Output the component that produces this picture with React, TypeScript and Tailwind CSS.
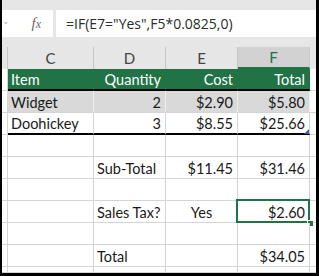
import React from "react";

type Cell = { t?: string; a?: "l" | "r" | "c" };

const cellFont = { fontFamily: "Lato, 'Liberation Sans', sans-serif" };

function Row({
  cells,
  variant,
  selectedF,
  triangle,
  h = 22,
}: {
  cells: Cell[];
  variant: "green" | "gray" | "white" | "plain";
  selectedF?: boolean;
  triangle?: boolean;
  h?: number;
}) {
  const widths = ["w-[86px]", "w-[72px]", "w-[72px]", "w-[72px]"];
  const table = variant !== "plain";
  const bg =
    variant === "green"
      ? "bg-[#217346] text-white"
      : variant === "gray"
      ? "bg-[#d9d9d9] text-[#1a1a1a]"
      : "bg-white text-[#1a1a1a]";
  const bottom =
    variant === "green" || variant === "white"
      ? "border-b-2 border-b-black"
      : "border-b border-b-[#d4d4d4]";
  return (
    <div className="flex shrink-0" style={{ height: h }}>
      <div className="w-[6px] shrink-0 border-r border-r-[#d4d4d4] border-b border-b-[#d4d4d4] bg-white" />
      {cells.map((c, i) => {
        const vr =
          variant === "green"
            ? "border-r border-r-[#217346]"
            : variant === "gray"
            ? "border-r border-r-[#ececec]"
            : "border-r border-r-[#d4d4d4]";
        const align =
          c.a === "r" ? "justify-end pr-[4px]" : c.a === "c" ? "justify-center" : "justify-start pl-[3px]";
        const sel = selectedF && i === 3;
        return (
          <div
            key={i}
            className={`relative shrink-0 flex items-center ${widths[i]} ${table ? bg : "bg-white text-[#1a1a1a]"} ${
              table ? bottom : "border-b border-b-[#d4d4d4]"
            } ${vr} ${align} text-[14.5px] pt-[2px] whitespace-nowrap`}
            style={cellFont}
          >
            {c.t}
            {sel && (
              <>
                <div className="absolute left-[-2px] top-[-2px] right-[-1px] bottom-[-1px] border-2 border-[#217346]" />
                <div className="absolute right-[-5px] bottom-[-5px] w-[7px] h-[7px] bg-[#217346] border border-white" />
              </>
            )}
            {triangle && i === 3 && (
              <svg className="absolute right-[0px] bottom-[-1px]" width="5" height="5" viewBox="0 0 5 5">
                <polygon points="5,0 5,5 0,5" fill="#3b5ba9" />
              </svg>
            )}
          </div>
        );
      })}
      <div className="w-[6px] shrink-0 border-b border-b-[#d4d4d4] bg-white" />
    </div>
  );
}

export default function App() {
  const headers = [
    { l: "C", w: "w-[86px]" },
    { l: "D", w: "w-[72px]" },
    { l: "E", w: "w-[72px]" },
    { l: "F", w: "w-[72px]" },
  ];
  return (
    <div className="w-[319px] h-[276px] overflow-hidden flex flex-col border-l-2 border-r-[3px] border-b-[3px] border-black bg-white">
      {/* formula bar */}
      <div className="h-[47px] shrink-0 bg-[#e6e6e6] pt-[10px] pb-[10px] flex gap-[3px]">
        <div className="w-[51px] h-[27px] bg-white relative flex items-center justify-end pr-[12px]">
          <span className="absolute left-[0px] top-[7px] text-[#b0b0b0] text-[9px] leading-none" style={{ fontFamily: "'DejaVu Sans', sans-serif" }}>
            ⌄
          </span>
          <span
            className="italic text-[#6a6a6a] text-[15px] leading-none"
            style={{ fontFamily: "'Liberation Serif', serif" }}
          >
            f<span className="text-[12px]">x</span>
          </span>
        </div>
        <div
          className="flex-1 h-[27px] bg-white flex items-center pl-[10px] text-[14px] text-[#2b2b2b] whitespace-nowrap"
          style={{ fontFamily: "'Open Sans', sans-serif" }}
        >
          =IF(E7="Yes",F5*0.0825,0)
        </div>
      </div>
      {/* column headers */}
      <div className="h-[22px] shrink-0 flex bg-[#e6e6e6]">
        <div className="w-[6px] shrink-0 border-r border-r-[#c6c6c6]" />
        {headers.map((h, i) => (
          <div
            key={h.l}
            className={`${h.w} shrink-0 flex items-center justify-center text-[15px] border-r ${
              i === 3
                ? "bg-[#d2d2d2] text-[#217346] border-r-[#c6c6c6] border-b-2 border-b-[#217346]"
                : "text-[#444] border-r-[#c6c6c6]"
            }`}
            style={cellFont}
          >
            {h.l}
          </div>
        ))}
        <div className="w-[6px] shrink-0" />
      </div>
      <Row
        variant="green"
        cells={[{ t: "Item" }, { t: "Quantity", a: "r" }, { t: "Cost", a: "r" }, { t: "Total", a: "r" }]}
      />
      <Row
        variant="gray"
        cells={[{ t: "Widget" }, { t: "2", a: "r" }, { t: "$2.90", a: "r" }, { t: "$5.80", a: "r" }]}
      />
      <Row
        variant="white"
        triangle
        cells={[{ t: "Doohickey" }, { t: "3", a: "r" }, { t: "$8.55", a: "r" }, { t: "$25.66", a: "r" }]}
      />
      <Row variant="plain" cells={[{}, {}, {}, {}]} />
      <Row variant="plain" cells={[{}, { t: "Sub-Total" }, { t: "$11.45", a: "r" }, { t: "$31.46", a: "r" }]} />
      <Row variant="plain" cells={[{}, {}, {}, {}]} />
      <Row variant="plain" selectedF cells={[{}, { t: "Sales Tax?" }, { t: "Yes", a: "c" }, { t: "$2.60", a: "r" }]} />
      <Row variant="plain" cells={[{}, {}, {}, {}]} />
      <Row variant="plain" cells={[{}, { t: "Total" }, {}, { t: "$34.05", a: "r" }]} />
      <Row variant="plain" h={6} cells={[{}, {}, {}, {}]} />
    </div>
  );
}
